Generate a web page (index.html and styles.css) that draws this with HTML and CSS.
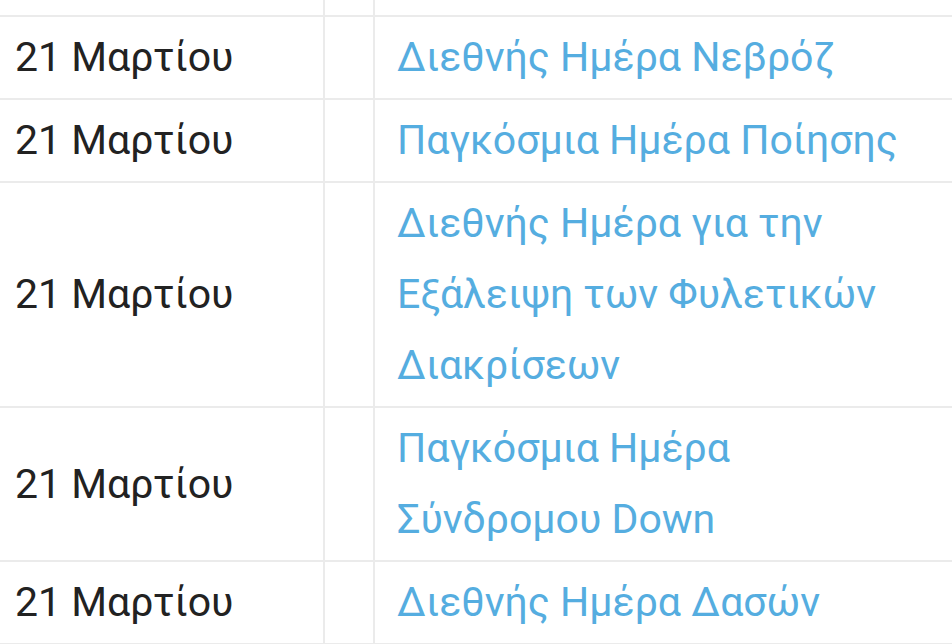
FILE: index.html
```html
<!DOCTYPE html>
<html lang="el">
<head>
<meta charset="utf-8">
<link rel="stylesheet" href="styles.css">
</head>
<body>
<div class="table">
  <div class="row top">
    <div class="cell date"></div>
    <div class="cell gap"></div>
    <div class="cell title"></div>
  </div>
  <div class="row">
    <div class="cell date">21 Μαρτίου</div>
    <div class="cell gap"></div>
    <div class="cell title"><a href="#">Διεθνής Ημέρα Νεβρόζ</a></div>
  </div>
  <div class="row">
    <div class="cell date">21 Μαρτίου</div>
    <div class="cell gap"></div>
    <div class="cell title"><a href="#">Παγκόσμια Ημέρα Ποίησης</a></div>
  </div>
  <div class="row">
    <div class="cell date">21 Μαρτίου</div>
    <div class="cell gap"></div>
    <div class="cell title"><a href="#">Διεθνής Ημέρα για την<br>Εξάλειψη των Φυλετικών<br>Διακρίσεων</a></div>
  </div>
  <div class="row">
    <div class="cell date">21 Μαρτίου</div>
    <div class="cell gap"></div>
    <div class="cell title"><a href="#">Παγκόσμια Ημέρα<br>Σύνδρομου Down</a></div>
  </div>
  <div class="row">
    <div class="cell date">21 Μαρτίου</div>
    <div class="cell gap"></div>
    <div class="cell title"><a href="#">Διεθνής Ημέρα Δασών</a></div>
  </div>
</div>
</body>
</html>
```
FILE: styles.css
```css
html, body {
  margin: 0;
  padding: 0;
  background: #ffffff;
}
body {
  width: 952px;
  height: 644px;
  overflow: hidden;
  font-family: Roboto, "Noto Sans", sans-serif;
  font-size: 41px;
  line-height: 71px;
  color: #222222;
}
.table {
  display: flex;
  flex-direction: column;
}
.row {
  display: flex;
  border-bottom: 2px solid #ebebeb;
}
.row.top {
  height: 15px;
}
.cell {
  box-sizing: border-box;
  padding: 5px 0;
  display: flex;
  align-items: center;
}
.row.top .cell {
  padding: 0;
}
.date {
  width: 325px;
  border-right: 2px solid #ebebeb;
  padding-left: 15px;
}
.gap {
  width: 50px;
  border-right: 2px solid #ebebeb;
}
.title {
  flex: 1;
  padding-left: 22px;
}
.title a {
  color: #55ade0;
  text-decoration: none;
}
```
